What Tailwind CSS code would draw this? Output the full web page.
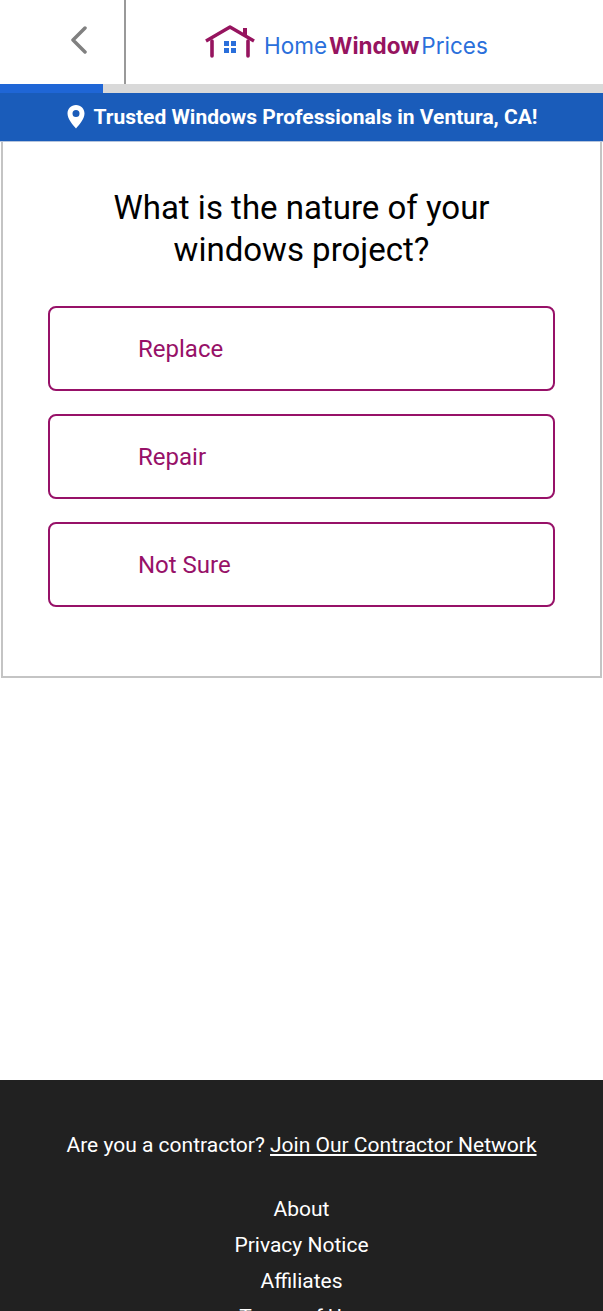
<!DOCTYPE html>
<html>
<head>
  <meta charset="utf-8" />
  <title>Home Window Prices</title>
  <meta name="viewport" content="width=device-width, initial-scale=1" />
  <script src="https://cdn.jsdelivr.net/npm/@tailwindcss/browser@4"></script>
</head>
<body class="bg-white font-['Roboto',sans-serif] h-[1311px] overflow-hidden">
  <!-- header -->
  <header class="flex h-[84px] bg-white">
    <div class="w-[126px] shrink-0 flex items-center justify-center border-r-2 border-[#999999]">
      <svg class="w-[18px] h-[28px] mb-[5px] ml-[33px]" viewBox="0 0 18 28" fill="none" stroke="#808080" stroke-width="3.500" stroke-linecap="round" stroke-linejoin="round"><path d="M15 2 L3 14 L15 26" /></svg>
    </div>
    <div class="flex-1 flex items-center pl-[78px] pb-[2px]">
      <svg class="w-[52px] h-[34px] shrink-0" viewBox="0 0 52 34" fill="none">
        <path d="M2 17 L26 3 L50 17" stroke="#96145f" stroke-width="3.400" stroke-linejoin="round" />
        <path d="M41 12 V4" stroke="#96145f" stroke-width="4" />
        <path d="M8 17 V32 M44 17 V32" stroke="#96145f" stroke-width="3.600" stroke-linecap="round" />
        <path d="M20 17 h5 v5 h-5z M27 17 h5 v5 h-5z M20 24 h5 v5 h-5z M27 24 h5 v5 h-5z" fill="#2a6fdb" />
      </svg>
      <div class="ml-[8px] mt-[10px] flex text-[22.500px] leading-none font-['Inter',sans-serif]">
        <span class="text-[#2a6fdb]">Home</span>
        <span class="text-[#96145f] font-bold ml-[2px]">Window</span>
        <span class="text-[#2a6fdb] ml-[2px]">Prices</span>
      </div>
    </div>
  </header>

  <!-- progress -->
  <div class="h-[9px] bg-[#d9d9d9]">
    <div class="h-full w-[103px] bg-[#1f66d6]"></div>
  </div>

  <!-- location banner -->
  <div class="h-[49px] bg-[#1a5cba] flex items-center justify-center gap-[8px] border-b border-[#b5c4dc]">
    <svg class="w-[18px] h-[24px] ml-[2px]" viewBox="0 0 18 24"><path fill-rule="evenodd" fill="#fff" d="M9 0 C4 0 .5 3.800 .5 8.500 C.5 14 6 20 9 23.500 C12 20 17.500 14 17.500 8.500 C17.500 3.800 14 0 9 0z M9 5 a3.500 3.500 0 1 1 0 7 a3.500 3.500 0 0 1 0-7z" /></svg>
    <span class="text-white font-bold text-[21px] leading-none">Trusted Windows Professionals in Ventura, CA!</span>
  </div>

  <!-- question card -->
  <main class="mx-[1px] h-[536px] border-2 border-t-0 border-[#c4c4c4] px-[45px] pt-[45px]">
    <h1 class="text-center text-black text-[33px] leading-[42px] font-normal">What is the nature of your<br />windows project?</h1>
    <div class="mt-[35px] flex flex-col gap-[23px]">
      <button class="h-[85px] w-full border-2 border-[#971168] rounded-[8px] text-left pl-[88px] text-[#971168] text-[24px]">Replace</button>
      <button class="h-[85px] w-full border-2 border-[#971168] rounded-[8px] text-left pl-[88px] text-[#971168] text-[24px]">Repair</button>
      <button class="h-[85px] w-full border-2 border-[#971168] rounded-[8px] text-left pl-[88px] text-[#971168] text-[24px]">Not Sure</button>
    </div>
  </main>

  <!-- footer -->
  <footer class="mt-[402px] bg-[#212121] text-white text-center text-[21px] pt-[49px] pb-10">
    <p class="leading-[32px]">Are you a contractor? <a href="#" class="underline">Join Our Contractor Network</a></p>
    <ul class="mt-[30px] leading-[36px]">
      <li>About</li>
      <li>Privacy Notice</li>
      <li>Affiliates</li>
      <li>Terms of Use</li>
    </ul>
  </footer>
</body>
</html>
